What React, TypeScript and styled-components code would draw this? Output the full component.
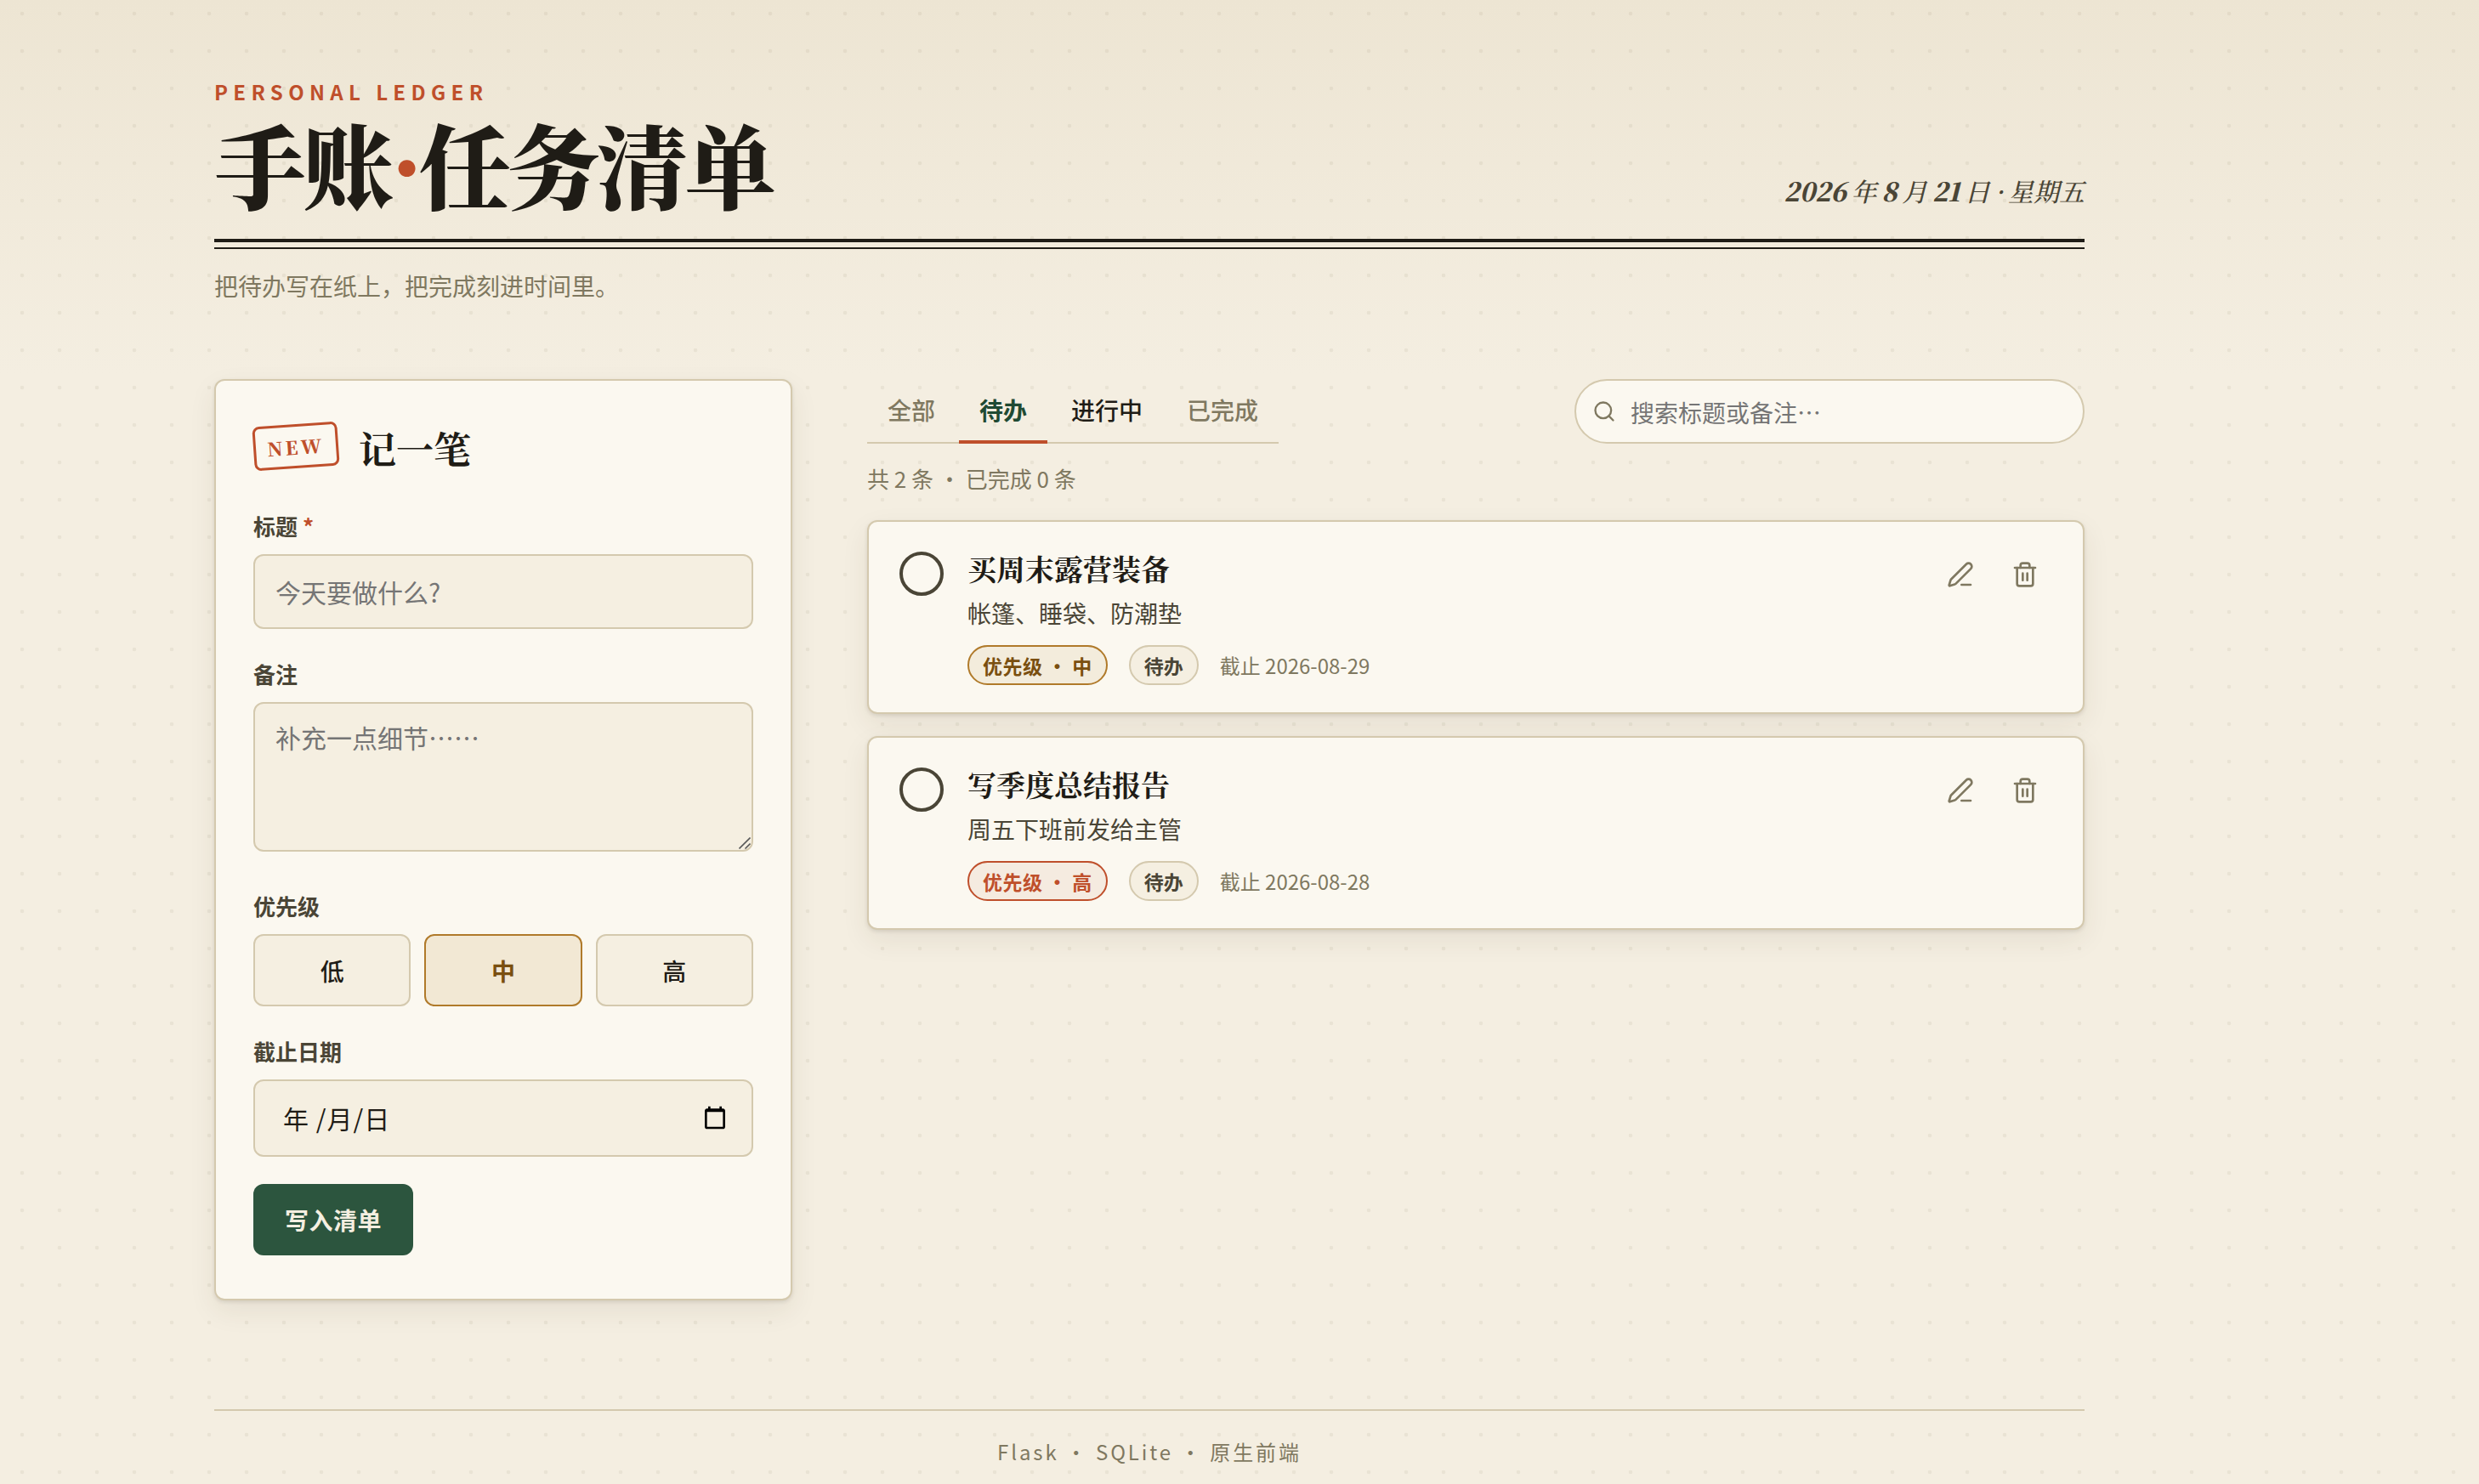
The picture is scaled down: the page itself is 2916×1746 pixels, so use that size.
import React from "react";
import styled, { createGlobalStyle } from "styled-components";
import { Search, PenLine, Trash2 } from "lucide-react";

const SANS = `"Noto Sans CJK SC", "Noto Sans", sans-serif`;
const SERIF = `"Noto Serif CJK SC", "Source Han Serif SC", "Liberation Serif", "Noto Sans CJK SC", serif`;
const INK = "#1f1c16";
const SOFT = "#4a4536";
const MUTED = "#7f7860";
const LINE = "#d4c9ae";
const PAPER = "#fbf8f0";
const FIELD = "#f5efe1";
const RUST = "#bf4f2b";
const GOLD = "#b07a2a";
const BROWN = "#7a4f10";

const Global = createGlobalStyle`
  * { box-sizing: border-box; }
  html, body { margin: 0; padding: 0; }
  body {
    min-height: 1746px;
    font-family: ${SANS};
    color: ${INK};
    background-color: #f4eee1;
    background-image:
      radial-gradient(circle at 26px 16px, rgba(122, 110, 80, 0.09) 2px, transparent 2.6px),
      linear-gradient(180deg, #ede5d3 0, #f4eee1 440px);
    background-size: 44px 44px, 100% 100%;
    background-repeat: repeat, no-repeat;
  }
  input::placeholder, textarea::placeholder { color: #757575; opacity: 1; }
`;

const Page = styled.div`
  width: 2200px;
  margin-left: 252px;
  padding-top: 92px;
`;
const Header = styled.header`
  position: relative;
  display: flex;
  justify-content: space-between;
  align-items: flex-end;
  padding-bottom: 30px;
  border-bottom: 4px solid ${INK};
  &::after {
    content: "";
    position: absolute;
    left: 0;
    right: 0;
    bottom: -12px;
    height: 2px;
    background: ${INK};
  }
`;
const Eyebrow = styled.div`
  font-size: 24px;
  line-height: 32px;
  font-weight: 700;
  letter-spacing: 0.265em;
  color: ${RUST};
`;
const Title = styled.h1`
  margin: 9px 0 0;
  font-family: ${SERIF};
  font-size: 108px;
  line-height: 118px;
  font-weight: 900;
  letter-spacing: -0.036em;
  color: ${INK};
`;
const Dot = styled.span`
  color: ${RUST};
`;
const DateLine = styled.div`
  font-family: ${SERIF};
  font-style: italic;
  font-size: 30px;
  font-weight: 500;
  line-height: 40px;
  word-spacing: -2px;
  margin-bottom: 7px;
  color: ${SOFT};
`;
const Num = styled.span`
  font-weight: 900;
`;
const Sub = styled.p`
  margin: 31px 0 0;
  font-size: 28px;
  line-height: 40px;
  color: ${MUTED};
`;
const Columns = styled.main`
  display: grid;
  grid-template-columns: 680px 1fr;
  gap: 88px;
  margin-top: 90px;
  align-items: start;
`;
const FormCard = styled.section`
  background: ${PAPER};
  border: 2px solid ${LINE};
  border-radius: 12px;
  padding: 44px 44px 51px;
  box-shadow: 0 2px 4px rgba(60, 50, 30, 0.12), 0 12px 32px rgba(60, 50, 30, 0.08);
`;
const FormHead = styled.div`
  display: flex;
  align-items: center;
  gap: 24px;
  height: 68px;
  margin-bottom: 42px;
`;
const Stamp = styled.span`
  display: flex;
  align-items: center;
  justify-content: center;
  width: 100px;
  height: 52px;
  margin-top: -2px;
  border: 3px solid ${RUST};
  border-radius: 8px;
  transform: rotate(-4deg);
  font-family: ${SERIF};
  font-weight: 900;
  font-size: 22px;
  letter-spacing: 0.16em;
  color: ${RUST};
`;
const FormTitle = styled.h2`
  margin: 2px 0 0;
  font-family: ${SERIF};
  font-size: 44px;
  line-height: 68px;
  font-weight: 700;
`;
const Field = styled.div<{ $after: number }>`
  display: flex;
  flex-direction: column;
  gap: 16px;
  margin-bottom: ${(p) => p.$after}px;
`;
const Label = styled.label`
  font-size: 26px;
  line-height: 34px;
  font-weight: 700;
  color: ${SOFT};
`;
const Req = styled.span`
  color: ${RUST};
`;
const TextInput = styled.input`
  display: block;
  width: 100%;
  height: 88px;
  padding: 0 24px;
  background: ${FIELD};
  border: 2px solid ${LINE};
  border-radius: 12px;
  font: 30px ${SANS};
  color: ${INK};
  outline: none;
`;
const AreaWrap = styled.div`
  position: relative;
  height: 176px;
`;
const TextArea = styled.textarea`
  display: block;
  width: 100%;
  height: 100%;
  padding: 18px 24px;
  background: ${FIELD};
  border: 2px solid ${LINE};
  border-radius: 12px;
  font: 30px/1.4 ${SANS};
  color: ${INK};
  outline: none;
  resize: none;
`;
const Grip = styled.svg`
  position: absolute;
  right: 3px;
  bottom: 3px;
  pointer-events: none;
`;
const Seg = styled.div`
  display: grid;
  grid-template-columns: repeat(3, 1fr);
  gap: 16px;
`;
const SegBtn = styled.button<{ $on?: boolean }>`
  height: 85px;
  background: ${(p) => (p.$on ? "#f2e8d4" : FIELD)};
  border: 2px solid ${(p) => (p.$on ? GOLD : LINE)};
  border-radius: 12px;
  font: ${(p) => (p.$on ? 700 : 500)} 28px ${SANS};
  color: ${(p) => (p.$on ? BROWN : INK)};
`;
const DateBox = styled.div`
  display: flex;
  align-items: center;
  justify-content: space-between;
  height: 91px;
  padding: 0 27px 2px 33px;
  background: ${FIELD};
  border: 2px solid ${LINE};
  border-radius: 12px;
  font-size: 30px;
  letter-spacing: 1px;
  color: ${INK};
`;
const Submit = styled.button`
  display: block;
  width: 188px;
  height: 84px;
  background: #2c553e;
  border: 0;
  border-radius: 12px;
  font: 700 28px ${SANS};
  letter-spacing: 0.02em;
  color: #f5efe1;
`;
const Toolbar = styled.div`
  display: flex;
  justify-content: space-between;
  align-items: flex-start;
`;
const Tabs = styled.nav`
  display: inline-flex;
  gap: 4px;
  height: 76px;
  border-bottom: 2px solid ${LINE};
`;
const Tab = styled.button<{ $state?: "on" | "hover" }>`
  height: 76px;
  padding: 16px 24px;
  background: none;
  border: 0;
  border-bottom: 4px solid ${(p) => (p.$state === "on" ? RUST : "transparent")};
  font: ${(p) => (p.$state === "on" ? 700 : 500)} 28px/40px ${SANS};
  color: ${(p) => (p.$state === "on" ? "#1f4a33" : p.$state === "hover" ? INK : MUTED)};
`;
const SearchBox = styled.label`
  display: flex;
  align-items: center;
  gap: 17px;
  width: 600px;
  height: 76px;
  padding: 0 19px;
  background: ${PAPER};
  border: 2px solid ${LINE};
  border-radius: 38px;
  color: ${MUTED};
`;
const SearchInput = styled.input`
  flex: 1;
  min-width: 0;
  padding: 2px 0 0;
  background: none;
  border: 0;
  outline: none;
  font: 28px ${SANS};
`;
const Stats = styled.div`
  margin-top: 23px;
  font-size: 26px;
  line-height: 36px;
  color: ${MUTED};
`;
const List = styled.div`
  display: flex;
  flex-direction: column;
  gap: 26px;
  margin-top: 31px;
`;
const Item = styled.article`
  display: flex;
  align-items: flex-start;
  gap: 28px;
  height: 228px;
  padding: 32px 36px;
  background: ${PAPER};
  border: 2px solid ${LINE};
  border-radius: 12px;
  box-shadow: 0 2px 4px rgba(60, 50, 30, 0.12), 0 12px 32px rgba(60, 50, 30, 0.08);
`;
const Check = styled.span`
  flex: none;
  width: 52px;
  height: 52px;
  margin-top: 3px;
  border: 4px solid ${SOFT};
  border-radius: 50%;
`;
const Body = styled.div`
  flex: 1;
  min-width: 0;
`;
const ItemTitle = styled.h3`
  margin: -2px 0 0;
  font-family: ${SERIF};
  font-size: 34px;
  line-height: 49px;
  font-weight: 700;
  color: ${INK};
`;
const Desc = styled.p`
  margin: 6px 0 0;
  font-size: 28px;
  line-height: 44px;
  color: ${SOFT};
`;
const Meta = styled.div`
  display: flex;
  align-items: center;
  gap: 25px;
  margin-top: 16px;
`;
const Chip = styled.span<{ $tone: "mid" | "high" | "status" }>`
  display: inline-flex;
  align-items: center;
  height: 47px;
  padding: 0 16px;
  border-radius: 24px;
  border: 2px solid ${(p) => (p.$tone === "mid" ? GOLD : p.$tone === "high" ? RUST : LINE)};
  background: ${(p) => (p.$tone === "mid" ? "#f3ecdc" : p.$tone === "high" ? "#f5ebe0" : FIELD)};
  color: ${(p) => (p.$tone === "mid" ? BROWN : p.$tone === "high" ? RUST : SOFT)};
  font-size: 23px;
  font-weight: 700;
  letter-spacing: ${(p) => (p.$tone === "status" ? 0 : "0.02em")};
  white-space: pre;
`;
const Due = styled.span`
  font-size: 24px;
  color: ${MUTED};
`;
const Actions = styled.div`
  display: flex;
  gap: 12px;
  margin-top: -2px;
`;
const IconBtn = styled.button`
  display: flex;
  align-items: center;
  justify-content: center;
  width: 64px;
  height: 64px;
  padding: 0;
  background: none;
  border: 0;
  color: ${MUTED};
`;
const Footer = styled.footer`
  margin-top: 128px;
  padding-top: 30px;
  border-top: 2px solid ${LINE};
  text-align: center;
  font-size: 24px;
  line-height: 36px;
  letter-spacing: 0.12em;
  color: ${MUTED};
`;

const CalendarIcon = () => (
  <svg width="32" height="32" viewBox="0 0 24 24" fill="#000" aria-hidden="true">
    <path d="M19 4h-1V2h-2v2H8V2H6v2H5c-1.11 0-1.99.9-1.99 2L3 20c0 1.1.89 2 2 2h14c1.1 0 2-.9 2-2V6c0-1.1-.9-2-2-2zm0 16H5V7h14v13z" />
  </svg>
);

const tasks = [
  { title: "买周末露营装备", desc: "帐篷、睡袋、防潮垫", tone: "mid" as const, level: "中", due: "2026-08-29" },
  { title: "写季度总结报告", desc: "周五下班前发给主管", tone: "high" as const, level: "高", due: "2026-08-28" },
];

export default function App() {
  return (
    <>
      <Global />
      <Page>
        <Header>
          <div>
            <Eyebrow>PERSONAL LEDGER</Eyebrow>
            <Title>
              手账<Dot>·</Dot>任务清单
            </Title>
          </div>
          <DateLine>
            <Num>2026</Num> 年 <Num>8</Num> 月 <Num>21</Num> 日 · 星期五
          </DateLine>
        </Header>
        <Sub>把待办写在纸上，把完成刻进时间里。</Sub>
        <Columns>
          <FormCard>
            <FormHead>
              <Stamp>NEW</Stamp>
              <FormTitle>记一笔</FormTitle>
            </FormHead>
            <Field $after={36}>
              <Label>
                标题 <Req>*</Req>
              </Label>
              <TextInput placeholder="今天要做什么?" />
            </Field>
            <Field $after={47}>
              <Label>备注</Label>
              <AreaWrap>
                <TextArea placeholder="补充一点细节……" />
                <Grip width="14" height="14" viewBox="0 0 14 14" aria-hidden="true">
                  <path d="M0.5 13.5 13.5 0.5M7.5 13.5 13.5 7.5" stroke="#5a5a5a" strokeWidth="1.6" fill="none" />
                </Grip>
              </AreaWrap>
            </Field>
            <Field $after={36}>
              <Label>优先级</Label>
              <Seg>
                <SegBtn>低</SegBtn>
                <SegBtn $on>中</SegBtn>
                <SegBtn>高</SegBtn>
              </Seg>
            </Field>
            <Field $after={32}>
              <Label>截止日期</Label>
              <DateBox>
                <span>年 /月/日</span>
                <CalendarIcon />
              </DateBox>
            </Field>
            <Submit>写入清单</Submit>
          </FormCard>
          <section>
            <Toolbar>
              <Tabs>
                <Tab>全部</Tab>
                <Tab $state="on">待办</Tab>
                <Tab $state="hover">进行中</Tab>
                <Tab>已完成</Tab>
              </Tabs>
              <SearchBox>
                <Search size={28} strokeWidth={2} />
                <SearchInput placeholder="搜索标题或备注…" />
              </SearchBox>
            </Toolbar>
            <Stats>共 2 条 · 已完成 0 条</Stats>
            <List>
              {tasks.map((t) => (
                <Item key={t.title}>
                  <Check />
                  <Body>
                    <ItemTitle>{t.title}</ItemTitle>
                    <Desc>{t.desc}</Desc>
                    <Meta>
                      <Chip $tone={t.tone}>优先级 · {t.level}</Chip>
                      <Chip $tone="status">待办</Chip>
                      <Due>截止 {t.due}</Due>
                    </Meta>
                  </Body>
                  <Actions>
                    <IconBtn aria-label="编辑">
                      <PenLine size={32} strokeWidth={2} />
                    </IconBtn>
                    <IconBtn aria-label="删除">
                      <Trash2 size={32} strokeWidth={2} />
                    </IconBtn>
                  </Actions>
                </Item>
              ))}
            </List>
          </section>
        </Columns>
        <Footer>Flask · SQLite · 原生前端</Footer>
      </Page>
    </>
  );
}
